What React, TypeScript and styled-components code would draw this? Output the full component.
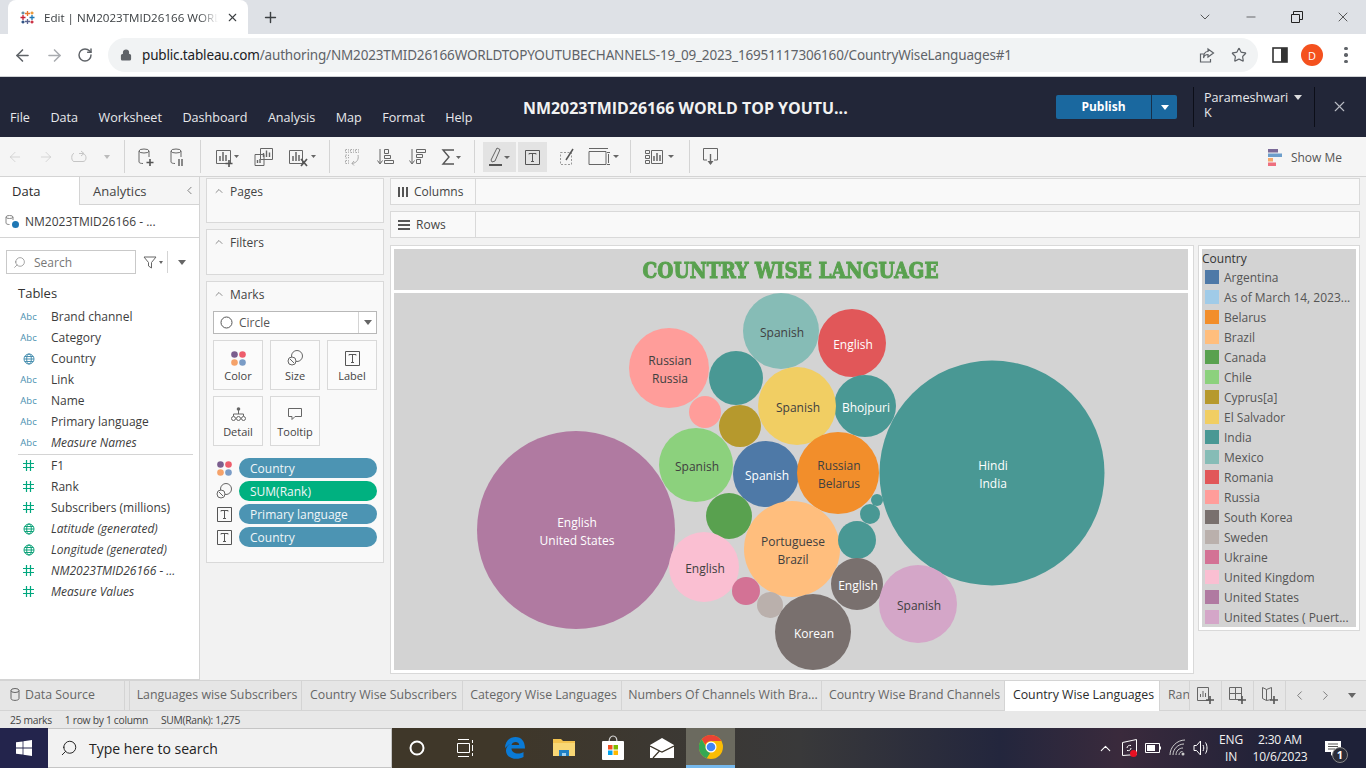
import React from 'react';
import styled, { createGlobalStyle } from 'styled-components';
import { ArrowLeft, ArrowRight, RotateCw, Lock, Star, X, Plus, ChevronDown, ChevronUp, ChevronLeft, ChevronRight, Search, Minus } from 'lucide-react';

const GlobalStyle = createGlobalStyle`
  html, body {
    margin: 0;
    padding: 0;
    width: 1366px;
    height: 768px;
    overflow: hidden;
    background: #f2f2f2;
    font-family: "Open Sans", "Liberation Sans", sans-serif;
  }
  * { box-sizing: border-box; }
`;

const Page = styled.div`
  width: 1366px;
  height: 768px;
  display: flex;
  flex-direction: column;
`;

/* browser chrome */
const TabStrip = styled.div`
  height: 34px;
  background: #dee1e6;
  display: flex;
  align-items: flex-end;
  padding-left: 8px;
`;

const BrowserTab = styled.div`
  width: 240px;
  height: 34px;
  background: #fff;
  border-radius: 8px 8px 0 0;
  display: flex;
  align-items: center;
  padding: 0 9px 0 12px;
  color: #3c4043;
  font-size: 11.6px;
`;

const TabTitle = styled.span`
  margin-left: 9px;
  width: 175px;
  white-space: nowrap;
  overflow: hidden;
  flex-shrink: 0;
  mask-image: linear-gradient(90deg, #000 155px, transparent 174px);
`;

const TabClose = styled.span`
  margin-left: auto;
  display: flex;
  color: #3c4043;
`;

const NewTab = styled.span`
  margin: 0 0 0 14px;
  height: 34px;
  display: flex;
  align-items: center;
  color: #3c4043;
`;

const WindowButtons = styled.div`
  margin-left: auto;
  height: 34px;
  display: flex;
  align-items: center;
  color: #333;
`;

const WindowButton = styled.span`
  width: 46px;
  display: flex;
  justify-content: center;
`;

const AddressRow = styled.div`
  height: 43px;
  background: #fff;
  border-bottom: 1px solid #d0d2d5;
  display: flex;
  align-items: center;
  padding-left: 12px;
`;

const NavButton = styled.span<{ $dim?: boolean }>`
  width: 32px;
  padding-left: 1px;
  display: flex;
  color: ${p => (p.$dim ? '#a9acb0' : '#5f6368')};
`;

const Omnibox = styled.div`
  width: 1150px;
  height: 34px;
  border-radius: 17px;
  background: #f1f3f4;
  display: flex;
  align-items: center;
  padding: 0 11px 0 12px;
  color: #5f6368;
`;

const Url = styled.div`
  margin-left: 10px;
  font-size: 13.5px;
  letter-spacing: -0.165px;
  white-space: nowrap;
  color: #5f6368;
  font-family: "Noto Sans", "Open Sans", sans-serif;
  b { font-weight: 400; color: #202124; }
`;

const OmniIcons = styled.div`
  margin-left: auto;
  display: flex;
  align-items: center;
  gap: 16px;
`;

const BrowserActions = styled.div`
  display: flex;
  align-items: center;
  margin-left: 14px;
  gap: 13px;
`;

const Avatar = styled.span`
  width: 22px;
  height: 22px;
  border-radius: 50%;
  background: #f4511e;
  color: #fff;
  font-size: 11px;
  display: flex;
  align-items: center;
  justify-content: center;
`;

const KebabDots = styled.span`
  display: flex;
  flex-direction: column;
  gap: 3px;
  margin-left: 8px;
  i {
    width: 3.5px;
    height: 3.5px;
    border-radius: 50%;
    background: #5f6368;
  }
`;

/* tableau header */
const AppHeader = styled.div`
  height: 60px;
  background: #222638;
  color: #fff;
  display: flex;
  padding-left: 10px;
`;

const MenuBar = styled.div`
  width: 513px;
  display: flex;
  gap: 20.5px;
  padding-top: 32px;
  font-size: 12.6px;
  line-height: 18px;
  color: #e8e9ec;
`;

const WorkbookTitle = styled.div`
  width: 533px;
  padding-top: 21px;
  font-size: 15.95px;
  line-height: 20px;
  font-weight: 700;
  color: #f2f2f2;
  white-space: nowrap;
`;

const PublishGroup = styled.div`
  margin-top: 18px;
  height: 24px;
  display: flex;
  border-radius: 2px;
  overflow: hidden;
  background: #1a689f;
`;

const PublishButton = styled.div`
  width: 96px;
  font-size: 12px;
  font-weight: 700;
  line-height: 24px;
  text-align: center;
  border-right: 1px solid #17304a;
`;

const PublishCaret = styled.div`
  width: 25px;
  display: flex;
  align-items: center;
  justify-content: center;
`;

const Caret = styled.span<{ $color?: string; $size?: number }>`
  display: inline-block;
  flex-shrink: 0;
  width: 0;
  height: 0;
  border-left: ${p => p.$size ?? 3}px solid transparent;
  border-right: ${p => p.$size ?? 3}px solid transparent;
  border-top: ${p => (p.$size ?? 3) + 1}px solid ${p => p.$color ?? '#666'};
`;

const UserBlock = styled.div`
  margin: 10px 0 10px 16px;
  width: 122px;
  padding: 3px 0 0 10px;
  border-left: 1px solid #0c0e18;
  border-right: 1px solid #0c0e18;
  font-size: 12.6px;
  line-height: 15px;
  color: #e8e9ec;
`;

const UserCaret = styled(Caret)`
  margin-left: 6px;
  vertical-align: 2px;
`;

const CloseApp = styled.span`
  margin-left: 16px;
  margin-top: 21px;
  color: #b9bbc3;
  display: flex;
  height: 18px;
`;

/* toolbar */
const Toolbar = styled.div`
  height: 40px;
  background: #f5f5f5;
  border-bottom: 1px solid #d4d4d4;
  display: flex;
  align-items: stretch;
`;

const ToolGroup = styled.div<{ $w: number; $pad?: number; $gap?: number; $last?: boolean }>`
  width: ${p => p.$w}px;
  margin: 3px 0;
  padding: 1px 0 0 ${p => p.$pad ?? 8}px;
  border-right: ${p => (p.$last ? 'none' : '1px solid #d4d4d4')};
  display: flex;
  align-items: center;
  gap: ${p => p.$gap ?? 12}px;
`;

const ToolPair = styled.span`
  display: flex;
  gap: 2px;
`;

const ToolIcon = styled.span<{ $active?: boolean; $w?: number }>`
  width: ${p => p.$w ?? 20}px;
  height: 30px;
  display: flex;
  align-items: center;
  justify-content: center;
  background: ${p => (p.$active ? '#e3e3e3' : 'transparent')};
`;

const ShowMe = styled.div`
  margin-left: auto;
  padding: 1px 24px 0 0;
  display: flex;
  align-items: center;
  gap: 8px;
  font-size: 12px;
  color: #555;
`;

/* workspace */
const Workspace = styled.div`
  height: 503px;
  display: flex;
  background: #f2f2f2;
`;

const DataPane = styled.div`
  width: 200px;
  background: #fff;
  border-right: 1px solid #d4d4d4;
  border-bottom: 1px solid #d4d4d4;
  display: flex;
  flex-direction: column;
  color: #333;
`;

const PaneTabs = styled.div`
  height: 28px;
  display: flex;
  font-size: 13px;
  line-height: 28px;
`;

const PaneTab = styled.div<{ $active?: boolean; $w: number }>`
  width: ${p => p.$w}px;
  padding-left: ${p => (p.$active ? 12 : 13)}px;
  background: ${p => (p.$active ? '#fff' : '#f5f5f5')};
  border-bottom: ${p => (p.$active ? 'none' : '1px solid #d4d4d4')};
  border-left: ${p => (p.$active ? 'none' : '1px solid #d4d4d4')};
  color: ${p => (p.$active ? '#2b2b2b' : '#444')};
  display: flex;
  align-items: center;
  justify-content: space-between;
  padding-right: 3px;
`;

const SourceRow = styled.div`
  height: 33px;
  border-bottom: 1px solid #d4d4d4;
  display: flex;
  align-items: center;
  padding-left: 5px;
  gap: 5px;
  font-size: 12px;
  color: #3d3d3d;
`;

const SearchRow = styled.div`
  margin-top: 12px;
  padding-left: 6px;
  height: 24px;
  display: flex;
  align-items: center;
`;

const SearchBox = styled.div`
  width: 130px;
  height: 24px;
  flex-shrink: 0;
  border: 1px solid #c9c9c9;
  display: flex;
  align-items: center;
  padding-left: 6px;
  gap: 8px;
  font-size: 12px;
  color: #777;
`;

const MirroredSearch = styled(Search)`
  transform: scaleX(-1);
`;

const SearchTools = styled.div`
  display: flex;
  align-items: center;
  margin-left: 7px;
  gap: 2px;
`;

const ToolDivider = styled.span`
  width: 1px;
  height: 22px;
  background: #d4d4d4;
  margin: 0 8px 0 2px;
`;

const TablesTitle = styled.div`
  margin: 9px 0 3px 18px;
  font-size: 13px;
  line-height: 20px;
  color: #333;
`;

const FieldRow = styled.div<{ $italic?: boolean }>`
  height: 21px;
  display: flex;
  align-items: center;
  padding-left: 20px;
  font-size: 12px;
  color: #3d3d3d;
  font-style: ${p => (p.$italic ? 'italic' : 'normal')};
  white-space: nowrap;
`;

const FieldIcon = styled.span`
  width: 31px;
  padding-right: 14px;
  flex-shrink: 0;
  display: flex;
  justify-content: center;
  font-style: normal;
  font-size: 9.5px;
  color: #4a90b0;
`;

const FieldDivider = styled.div`
  height: 1px;
  background: #d4d4d4;
  margin: 1px 6px 0 18px;
`;

const CardsColumn = styled.div`
  width: 190px;
  padding: 1px 6px 0;
  display: flex;
  flex-direction: column;
  gap: 6px;
`;

const Card = styled.div<{ $h: number }>`
  height: ${p => p.$h}px;
  background: #f9f9f9;
  border: 1px solid #d9d9d9;
  padding: 0 6px;
  font-size: 12px;
  color: #444;
`;

const CardTitle = styled.div`
  height: 24px;
  display: flex;
  align-items: center;
  gap: 5px;
  color: #444;
`;

const MarkSelect = styled.div`
  margin-top: 5px;
  height: 23px;
  background: #fff;
  border: 1px solid #b8b8b8;
  display: flex;
  align-items: center;
  padding-left: 6px;
  gap: 6px;
  color: #555;
`;

const SelectCaret = styled.span`
  margin-left: auto;
  width: 18px;
  height: 21px;
  border-left: 1px solid #d4d4d4;
  display: flex;
  align-items: center;
  justify-content: center;
`;

const MarkGrid = styled.div`
  margin-top: 6px;
  display: grid;
  grid-template-columns: repeat(3, 50px);
  grid-auto-rows: 50px;
  gap: 6px 7px;
`;

const MarkButton = styled.div`
  background: #fbfbfb;
  border: 1px solid #d9d9d9;
  display: flex;
  flex-direction: column;
  align-items: center;
  padding-top: 8px;
  gap: 1px;
  font-size: 11px;
  line-height: 15px;
  color: #444;
`;

const MarkIcon = styled.span`
  height: 18px;
  display: flex;
  align-items: center;
`;

const PillList = styled.div`
  margin-top: 12px;
  display: flex;
  flex-direction: column;
  gap: 3px;
`;

const PillRow = styled.div`
  display: flex;
  align-items: center;
  gap: 4px;
`;

const PillIcon = styled.span`
  width: 22px;
  display: flex;
  justify-content: center;
`;

const Pill = styled.div<{ $color: string }>`
  width: 138px;
  height: 20px;
  border-radius: 10px;
  padding-left: 11px;
  line-height: 21px;
  font-size: 12px;
  color: #f0f6f8;
  background: ${p => p.$color};
`;

const MainColumn = styled.div`
  flex: 1;
  display: flex;
  flex-direction: column;
  padding: 1px 6px 0 0;
`;

const Shelf = styled.div`
  height: 27px;
  margin-bottom: 6px;
  background: #f9f9f9;
  border: 1px solid #d9d9d9;
  display: flex;
  font-size: 12px;
  color: #444;
`;

const ShelfLabel = styled.div`
  width: 85px;
  display: flex;
  align-items: center;
  padding-left: 7px;
  gap: 6px;
  border-right: 1px solid #d9d9d9;
`;

const ShelfBars = styled.span`
  display: flex;
  width: 10px;
  gap: 2px;
  i { flex: 1; height: 10px; background: #555; }
`;

const ShelfRowsIcon = styled.span`
  display: flex;
  flex-direction: column;
  gap: 2px;
  width: 12px;
  i { height: 2px; background: #555; }
`;

const ViewArea = styled.div`
  margin-top: 1px;
  display: flex;
  align-items: flex-start;
  gap: 4px;
`;

const Dashboard = styled.div`
  width: 804px;
  height: 429px;
  background: #fff;
  border: 1px solid #d9d9d9;
  padding: 3px;
  display: flex;
  flex-direction: column;
  gap: 3px;
`;

const ViewTitle = styled.div`
  height: 41px;
  width: 794px;
  background: #d3d3d3;
  display: flex;
  align-items: center;
  justify-content: center;
`;

const TitleText = styled.span`
  font-family: "DejaVu Serif", "Liberation Serif", serif;
  font-weight: 700;
  font-size: 23px;
  color: #59a14f;
  -webkit-text-stroke: 1.1px #59a14f;
  white-space: nowrap;
  display: inline-block;
  transform: scaleX(0.806);
`;

const ChartBox = styled.div`
  width: 794px;
  height: 377px;
  background: #d3d3d3;
  overflow: hidden;
`;

const LegendBox = styled.div`
  width: 162px;
  height: 386px;
  background: #fff;
  border: 1px solid #d9d9d9;
  padding: 3px;
`;

const LegendInner = styled.div`
  height: 100%;
  background: #d3d3d3;
  padding-top: 1px;
  font-size: 12px;
  color: #555;
`;

const LegendTitle = styled.div`
  height: 17px;
  line-height: 17px;
  color: #333;
`;

const LegendRow = styled.div`
  height: 20px;
  display: flex;
  align-items: center;
  gap: 5px;
  padding-left: 3px;
  white-space: nowrap;
`;

const Swatch = styled.span<{ $color: string }>`
  width: 14px;
  height: 14px;
  background: ${p => p.$color};
  flex-shrink: 0;
`;

/* sheet tabs */
const SheetTabs = styled.div`
  height: 31px;
  background: #e6e6e6;
  border-top: 1px solid #d4d4d4;
  border-bottom: 1px solid #d4d4d4;
  display: flex;
  font-size: 12.35px;
  color: #666;
`;

const SheetTab = styled.div<{ $w: number; $active?: boolean; $clip?: boolean }>`
  width: ${p => p.$w}px;
  flex-shrink: 0;
  height: ${p => (p.$active ? 30 : 29)}px;
  background: ${p => (p.$active ? '#fff' : 'transparent')};
  color: ${p => (p.$active ? '#2b2b2b' : '#666')};
  border-right: 1px solid #d4d4d4;
  padding: 0 0 3px ${p => (p.$clip ? 8 : 3)}px;
  display: flex;
  align-items: center;
  justify-content: ${p => (p.$clip ? 'flex-start' : 'center')};
  white-space: nowrap;
  overflow: hidden;
`;

const DataSourceTab = styled(SheetTab)`
  justify-content: flex-start;
  padding-left: 10px;
  gap: 5px;
`;

const TabGap = styled.span`
  width: 5px;
  border-right: 1px solid #d4d4d4;
`;

const SheetTool = styled.span`
  width: 32px;
  height: 29px;
  flex-shrink: 0;
  border-right: 1px solid #d4d4d4;
  display: flex;
  align-items: center;
  justify-content: center;
`;

const SheetNav = styled.span`
  width: 26.5px;
  flex-shrink: 0;
  display: flex;
  align-items: center;
  justify-content: center;
  color: #666;
`;

const StatusBar = styled.div`
  height: 17px;
  background: #e8e8e8;
  display: flex;
  align-items: center;
  padding-left: 10px;
  gap: 13px;
  font-size: 10.3px;
  letter-spacing: -0.3px;
  color: #444;
`;

/* windows taskbar */
const Taskbar = styled.div`
  height: 40px;
  display: flex;
  align-items: center;
  color: #fff;
  background: linear-gradient(90deg, #3f3729 0, #3f3729 500px, #39393a 800px, #23263d 1000px, #3a2a3c 1120px, #1e2138 1290px);
`;

const StartButton = styled.div`
  width: 48px;
  height: 40px;
  background: #23244c;
  display: flex;
  align-items: center;
  justify-content: center;
`;

const TaskSearch = styled.div`
  width: 344px;
  height: 40px;
  background: #f2f2f2;
  border: 1px solid #c5c5c5;
  border-left: none;
  display: flex;
  align-items: center;
  padding-left: 12px;
  gap: 11px;
  font-size: 14px;
  color: #222;
`;

const TaskIcon = styled.span<{ $active?: boolean }>`
  width: 49px;
  height: 40px;
  display: flex;
  align-items: center;
  justify-content: center;
  background: ${p => (p.$active ? '#6b6a5f' : 'transparent')};
  border-bottom: ${p => (p.$active ? '3px solid #76b9ed' : 'none')};
`;

const TrayArea = styled.div`
  margin-left: auto;
  display: flex;
  align-items: center;
  padding-right: 25px;
  height: 40px;
`;

const TrayIcons = styled.div`
  display: flex;
  align-items: center;
  gap: 6.5px;
  margin-right: 6px;
`;

const TrayText = styled.div<{ $w: number }>`
  width: ${p => p.$w}px;
  text-align: center;
  font-size: 12px;
  line-height: 17px;
  letter-spacing: -0.2px;
  color: #f2f2f2;
`;

const NotifyWrap = styled.span`
  position: relative;
  display: flex;
  margin-left: 12px;
`;

const NotifyBadge = styled.span`
  position: absolute;
  right: -7px;
  bottom: -7px;
  width: 16px;
  height: 16px;
  border-radius: 50%;
  background: #2a2c38;
  border: 1px solid #888;
  font-size: 11px;
  font-weight: 700;
  line-height: 14px;
  text-align: center;
  color: #fff;
`;

/* icons drawn to match the tableau set */
const Glyph: React.FC<{ w?: number; h?: number; children: React.ReactNode; stroke?: string; weight?: number }> = ({ w = 20, h = 20, children, stroke = '#666', weight = 1 }) => (
  <svg width={w} height={h} viewBox={`0 0 ${w} ${h}`} fill="none" stroke={stroke} strokeWidth={weight}>
    {children}
  </svg>
);

const TableauLogo = () => (
  <svg width={15} height={15} viewBox="0 0 15 15" strokeWidth={1.3}>
    <path d="M7.5 1v5M5 3.5h5" stroke="#e8762c" />
    <path d="M7.5 9v5M5 11.5h5" stroke="#5b6591" />
    <path d="M3 5v5M.5 7.5h5" stroke="#c72035" />
    <path d="M12 5v5M9.5 7.5h5" stroke="#1f77b4" />
    <path d="M3 1.5v3M1.5 3h3" stroke="#59879b" />
    <path d="M12 1.5v3M10.5 3h3" stroke="#eb912b" />
    <path d="M3 10.5v3M1.5 12h3" stroke="#1f447a" />
    <path d="M12 10.5v3M10.5 12h3" stroke="#c72035" />
  </svg>
);

const Cylinder: React.FC<{ pause?: boolean }> = ({ pause }) => (
  <Glyph w={18} h={20}>
    <ellipse cx={7} cy={4} rx={5} ry={2} />
    <path d="M2 4v11c0 1 2 1.5 4 1.5M12 4v6" />
    {pause ? <path d="M10 12v7M13 12v7" strokeWidth={1.5} /> : <path d="M13 12v7M9.5 15.5h7" strokeWidth={1.6} stroke="#555" />}
  </Glyph>
);

const SmallCylinder = () => (
  <Glyph w={10} h={13}>
    <ellipse cx={5} cy={2.5} rx={4} ry={2} />
    <path d="M1 2.500v8c0 2.500 8 2.500 8 0v-8" />
  </Glyph>
);

const BarsPlus = () => (
  <Glyph w={24} h={20}>
    <path d="M1.5 3.5h14v13h-14z" />
    <path d="M5 14V9M8 14V5M11 14V8" strokeWidth={1.5} />
    <path d="M14 13v7M10.5 16.5h7" strokeWidth={1.6} stroke="#555" />
    <path d="M19 8h5l-2.500 3z" fill="#666" stroke="none" />
  </Glyph>
);

const BarsStack = () => (
  <Glyph w={19} h={20}>
    <path d="M6.500 1.500h12v11h-12zM1 7.500h9v11h-9z" fill="#f5f5f5" />
    <path d="M9.500 10V6M12.500 10V3.500M15.500 10V5.500M3.500 16v-3M6 16v-4" strokeWidth={1.4} />
  </Glyph>
);

const BarsClear = () => (
  <Glyph w={28} h={20}>
    <path d="M1.500 3.500h13v13h-13z" />
    <path d="M5 14V9M8 14V5M11 14V8" strokeWidth={1.5} />
    <path d="M13 12l6 7M19 12l-6 7" strokeWidth={1.7} stroke="#555" />
    <path d="M23 8h5l-2.500 3z" fill="#666" stroke="none" />
  </Glyph>
);

const SwapIcon = () => (
  <Glyph w={18} h={20} stroke="#aaa">
    <path d="M1.500 2.500h3v3h-3zM6.500 2.500h3v3h-3zM11.500 2.500h3v3h-3zM1.500 8h3v3h-3zM1.500 13.500h3v3h-3z" strokeDasharray="1.500 1" />
    <path d="M14 8c1 4-1 8-6 8.500M10 14l-2 2.500 2 2" />
  </Glyph>
);

const SortAsc = () => (
  <Glyph w={17} h={20}>
    <path d="M3 2v14M.5 13.500L3 17l2.500-3.500" />
    <path d="M7.500 2.500h4v4h-4zM7.500 8.500h6v3h-6zM7.500 13.500h9v3h-9z" />
  </Glyph>
);

const SortDesc = () => (
  <Glyph w={17} h={20}>
    <path d="M3 2v14M.5 13.500L3 17l2.500-3.500" />
    <path d="M7.500 2.500h9v3h-9zM7.500 7.500h6v3h-6zM7.500 12.500h4v4h-4z" />
  </Glyph>
);

const SigmaIcon = () => (
  <Glyph w={20} h={20} stroke="#555">
    <path d="M13 3H2l6 7-6 7h11" strokeWidth={1.4} />
    <path d="M15 9h5l-2.500 3z" fill="#666" stroke="none" />
  </Glyph>
);

const HighlightIcon = () => (
  <Glyph w={23} h={22}>
    <path d="M3 14L9 2l3 1.500L7 15l-3 1z" />
    <path d="M1 19h13" strokeWidth={2} stroke="#555" />
    <path d="M16 10h6l-3 3z" fill="#666" stroke="none" />
  </Glyph>
);

const TextBox = () => (
  <Glyph w={17} h={17} stroke="#555">
    <path d="M1.500 1.500h14v14h-14z" />
    <path d="M5 5.500V4.500h7v1M8.500 4.500v8M7 12.500h3" />
  </Glyph>
);

const FormatIcon = () => (
  <Glyph w={17} h={20} stroke="#999">
    <path d="M1.500 5.500h11v12h-11z" strokeDasharray="2 1.500" />
    <path d="M7 13L14 2" stroke="#555" strokeWidth={1.5} />
  </Glyph>
);

const FitIcon = () => (
  <Glyph w={31} h={20}>
    <path d="M1 1.500h19M1 4.500h17v13H1zM20.500 7v9M19 5.500h3M19 17.500h3" />
    <path d="M25 8h6l-3 3z" fill="#666" stroke="none" />
  </Glyph>
);

const ShowMeMini = () => (
  <Glyph w={30} h={20}>
    <path d="M1.500 3.500h4v3h-4zM1.500 8.500h4v3h-4zM1.500 13.500h4v3h-4zM7.500 3.500h11v13h-11z" />
    <path d="M10 14V9M13 14V6M16 14V8" strokeWidth={1.5} />
    <path d="M24 8h6l-3 3z" fill="#666" stroke="none" />
  </Glyph>
);

const DownloadTray = () => (
  <Glyph w={17} h={20}>
    <path d="M5 13H1.500V1.500h14V13H12" />
    <path d="M8.500 7v10" strokeWidth={1.4} />
    <path d="M5.500 14h6L8.500 18z" fill="#666" stroke="none" />
  </Glyph>
);

const RedoIcon = () => (
  <Glyph w={18} h={20} stroke="#c5c5c5">
    <path d="M4 6.500c-3 0-3 8 0 8h9c4 0 4-7 0-8H9M11 4l3 2.500L11 9" />
  </Glyph>
);

const ShowMeIcon = () => (
  <svg width={16} height={20} viewBox="0 0 16 20">
    <rect x={1} y={2} width={10} height={3.500} fill="#7b6a98" />
    <rect x={1} y={6.500} width={14} height={3.500} fill="#6d9ecb" />
    <rect x={1} y={11} width={5} height={3.500} fill="#f5a86c" />
    <rect x={1} y={15.500} width={8} height={3.500} fill="#ee6f7e" />
  </svg>
);

const ColorDots: React.FC<{ size?: number }> = ({ size = 15 }) => (
  <svg width={size} height={size} viewBox="0 0 15 15">
    <circle cx={3.500} cy={3.500} r={3.300} fill="#7b5e8e" />
    <circle cx={11.500} cy={3.500} r={3.300} fill="#ee5d6c" />
    <circle cx={3.500} cy={11.500} r={3.300} fill="#f5a26a" />
    <circle cx={11.500} cy={11.500} r={3.300} fill="#7a9cc6" />
  </svg>
);

const SizeCircles = () => (
  <Glyph w={16} h={16}>
    <circle cx={10} cy={6} r={5.500} />
    <circle cx={5} cy={11} r={4} fill="#f9f9f9" />
    <path d="M3 9l4 4" />
  </Glyph>
);

const DetailIcon = () => (
  <Glyph w={15} h={15}>
    <circle cx={7.500} cy={2} r={1.800} fill="#666" stroke="none" />
    <path d="M7.500 3v4M2.500 9V7h10v2" />
    <circle cx={2.500} cy={11.500} r={2} />
    <circle cx={7.500} cy={11.500} r={2} />
    <circle cx={12.500} cy={11.500} r={2} />
  </Glyph>
);

const TooltipIcon = () => (
  <Glyph w={16} h={15}>
    <path d="M1.500 1.500h13v8H8l-3 3v-3H1.500z" />
  </Glyph>
);

const CircleMark = () => (
  <Glyph w={13} h={13}>
    <circle cx={6.500} cy={6.500} r={5.500} stroke="#555" />
  </Glyph>
);

const GlobeIcon: React.FC<{ dark?: boolean }> = ({ dark }) => (
  <Glyph w={12} h={12} stroke={dark ? '#0fa37a' : '#4a90b0'}>
    <circle cx={6} cy={6} r={5} />
    <ellipse cx={6} cy={6} rx={2.300} ry={5} />
    <path d="M1 6h10M1.800 3.500h8.400M1.800 8.500h8.400" />
  </Glyph>
);

const HashIcon = () => (
  <Glyph w={11} h={11} stroke="#00a77e" weight={1.2}>
    <path d="M3.500 0v11M7.500 0v11M0 3.500h11M0 7.500h11" />
  </Glyph>
);

const SourceIcon = () => (
  <svg width={15} height={15} viewBox="0 0 15 15" fill="none" stroke="#888">
    <ellipse cx={4.500} cy={3} rx={3.500} ry={1.500} />
    <path d="M1 3v6c0 1 1.500 1.500 3.500 1.500M8 3v3" />
    <circle cx={10.500} cy={10.500} r={3.500} fill="#1f77b4" stroke="none" />
  </svg>
);

const FilterIcon = () => (
  <Glyph w={14} h={14}>
    <path d="M1 2h12L8.500 7.500V13l-3-2V7.500z" />
  </Glyph>
);

const SheetPlus: React.FC<{ kind: 'sheet' | 'dash' | 'story' }> = ({ kind }) => (
  <Glyph w={19} h={19}>
    {kind === 'sheet' && <path d="M1.500 1.500h11v13h-11zM4.500 11V8M7 11V5M9.500 11V7" />}
    {kind === 'dash' && <path d="M1.500 1.500h12v12h-12zM1.500 7.500h12M7.500 1.500v12" />}
    {kind === 'story' && <path d="M2.500 1.500l4 2 5-2v12l-5 1-4-2zM6.500 3.500v11" />}
    <path d="M14 10v8M10 14h8" strokeWidth={1.6} stroke="#555" />
  </Glyph>
);

const WindowsFlag = () => (
  <svg width={16} height={16} viewBox="0 0 16 16" fill="#fff">
    <path d="M0 2.300l6.600-.9v6.200H0zM7.400 1.300L16 0v7.600H7.400zM0 8.400h6.600v6.200L0 13.700zM7.400 8.400H16V16l-8.600-1.300z" />
  </svg>
);

const TaskViewIcon = () => (
  <svg width={18} height={18} viewBox="0 0 18 18" fill="none" stroke="#fff">
    <path d="M1 .5h11M1 17.500h11M.5 4.500h12v9H.5zM15.500 1v3M15.500 6v6M15.500 14v3" />
  </svg>
);

const EdgeLogo = () => (
  <svg width={22} height={24} viewBox="0 0 22 24">
    <path
      d="M1 12C1 5 6 1 11.500 1 17.500 1 21 5.500 21 12.500H7.500c.2 5 7 6.500 12 3.500v5c-6 3.500-17 2-17.500-6-.2-3 1.500-5.500 4-7C4 9 3 10 1 12zM7.500 9h7.700c0-4-7-4-7.700 0z"
      fill="#0a7ad6"
    />
  </svg>
);

const FolderLogo = () => (
  <svg width={22} height={20} viewBox="0 0 22 20">
    <path d="M0 1h8l2 2h12v15H0z" fill="#f3c34f" />
    <path d="M0 5h22v13H0z" fill="#f8d775" />
    <path d="M6 18v-6h10v6z" fill="#1e7fc4" />
    <path d="M9 18v-3h4v3z" fill="#9ed0ef" />
  </svg>
);

const StoreLogo = () => (
  <svg width={24} height={26} viewBox="0 0 24 26">
    <path d="M8 7c0-8 8-8 8 0" fill="none" stroke="#ddd" strokeWidth={1.2} />
    <rect x={1} y={6} width={22} height={19} rx={1} fill="#fff" />
    <rect x={7} y={10} width={4.500} height={4.500} fill="#f25022" />
    <rect x={12.500} y={10} width={4.500} height={4.500} fill="#7fba00" />
    <rect x={7} y={15.500} width={4.500} height={4.500} fill="#00a4ef" />
    <rect x={12.500} y={15.500} width={4.500} height={4.500} fill="#ffb900" />
  </svg>
);

const MailLogo = () => (
  <svg width={24} height={20} viewBox="0 0 24 20">
    <path d="M0 7l12-7 12 7v13H0z" fill="#fff" />
    <path d="M0 8l9.500 5L3 20M24 8L12 14l-2.500-1" fill="none" stroke="#3a3328" strokeWidth={1.3} />
  </svg>
);

const ChromeLogo = () => (
  <svg width={24} height={24} viewBox="0 0 24 24">
    <circle cx={12} cy={12} r={12} fill="#fbbc04" />
    <path d="M12 0a12 12 0 0 1 10.400 6H12a6 6 0 0 0-5.600 3.700L2.700 4.300A12 12 0 0 1 12 0z" fill="#ea4335" />
    <path d="M2.700 4.300l4 6.800a6 6 0 0 0 4.400 6.800L7.800 23.300A12 12 0 0 1 2.700 4.300z" fill="#34a853" />
    <circle cx={12} cy={12} r={5.500} fill="#fff" />
    <circle cx={12} cy={12} r={4.300} fill="#4285f4" />
  </svg>
);

const TrayUsb = () => (
  <svg width={18} height={20} viewBox="0 0 18 20" fill="none" stroke="#fff">
    <path d="M1.500 4.500l14-3v15l-14 1zM6 10c0-2 2-3 4-2.500M10 10c0 2-2 3-4 2.500" />
    <circle cx={12.500} cy={15.500} r={3.500} fill="#e81123" stroke="none" />
  </svg>
);

const TrayBattery = () => (
  <svg width={17} height={12} viewBox="0 0 17 12" fill="none" stroke="#fff">
    <path d="M.5 1.500h14v9H.5zM15.500 4.500v3" />
    <rect x={2} y={3} width={8} height={6} fill="#fff" stroke="none" />
  </svg>
);

const TrayWifi = () => (
  <svg width={18} height={18} viewBox="0 0 18 18" fill="none" stroke="#ccc">
    <path d="M1 16C1 8 8 1 16 1M4 16c0-6 5-11 11-11M7 16c0-4 3-7 7-7M10 16c0-2 1.500-3.500 3.500-3.500" />
    <circle cx={14} cy={15} r={1.500} fill="#ccc" stroke="none" />
  </svg>
);

const TraySound = () => (
  <svg width={16} height={18} viewBox="0 0 16 18" fill="none" stroke="#fff">
    <path d="M1 6.500h2.500L7.500 2v14l-4-4.500H1zM10 6c1 2 1 4 0 6M12.500 3.500c2 3 2 8 0 11" />
  </svg>
);

const NotifyIcon = () => (
  <svg width={16} height={15} viewBox="0 0 16 15">
    <path d="M0 0h16v11H9l-3 4v-4H0z" fill="#fff" />
    <path d="M3 3h10M3 5.500h10M3 8h7" stroke="#555" />
  </svg>
);

const ShareIcon = () => (
  <svg width={16} height={16} viewBox="0 0 16 16" fill="none" stroke="#5f6368" strokeWidth={1.2}>
    <path d="M5 7H1.500v8h10v-3M9 2l5.500 4-5.500 4V7.500C6.500 7.500 5 9 4.500 11c0-4 1.500-6.500 4.500-6.500z" />
  </svg>
);

const SidePanelIcon = () => (
  <svg width={16} height={16} viewBox="0 0 16 16" fill="none">
    <rect x={1} y={1} width={14} height={14} stroke="#333" strokeWidth={1.6} fill="#fff" />
    <rect x={9} y={1} width={6} height={14} fill="#333" />
  </svg>
);

const RestoreIcon = () => (
  <svg width={12} height={12} viewBox="0 0 12 12" fill="none" stroke="#222">
    <path d="M2.500 3.500V.5h9v8h-3M.5 3.500h8v8h-8z" />
  </svg>
);

interface Bubble {
  x: number;
  y: number;
  r: number;
  color: string;
  lines?: string[];
  light?: boolean;
}

// positions are page coordinates read off the packed bubble view
const chartLeft = 394;
const chartTop = 293;

const bubbles: Bubble[] = [
  { x: 992, y: 473, r: 112.5, color: '#499894', lines: ['Hindi', 'India'], light: true },
  { x: 576, y: 530, r: 99, color: '#b07aa1', lines: ['English', 'United States'], light: true },
  { x: 781, y: 331, r: 38, color: '#86bcb6', lines: ['Spanish'] },
  { x: 852, y: 343, r: 34, color: '#e15759', lines: ['English'], light: true },
  { x: 669, y: 368, r: 40, color: '#ff9d9a', lines: ['Russian', 'Russia'] },
  { x: 736, y: 378, r: 27, color: '#499894' },
  { x: 865, y: 406, r: 31, color: '#499894', lines: ['Bhojpuri'], light: true },
  { x: 797, y: 406, r: 39, color: '#f1ce63', lines: ['Spanish'] },
  { x: 705, y: 412, r: 16, color: '#ff9d9a' },
  { x: 740, y: 426, r: 21, color: '#b6992d' },
  { x: 696, y: 465, r: 37, color: '#8cd17d', lines: ['Spanish'] },
  { x: 766, y: 474, r: 33, color: '#4e79a7', lines: ['Spanish'], light: true },
  { x: 838, y: 473, r: 41, color: '#f28e2b', lines: ['Russian', 'Belarus'] },
  { x: 729, y: 516, r: 23, color: '#59a14f' },
  { x: 792, y: 549, r: 48, color: '#ffbe7d', lines: ['Portuguese', 'Brazil'] },
  { x: 877, y: 500, r: 6, color: '#499894' },
  { x: 870, y: 514, r: 10, color: '#499894' },
  { x: 857, y: 540, r: 19, color: '#499894' },
  { x: 704, y: 567, r: 35, color: '#fabfd2', lines: ['English'] },
  { x: 857, y: 584, r: 26, color: '#79706e', lines: ['English'], light: true },
  { x: 918, y: 604, r: 39, color: '#d4a6c8', lines: ['Spanish'] },
  { x: 746, y: 591, r: 14, color: '#d37295' },
  { x: 770, y: 605, r: 13, color: '#bab0ac' },
  { x: 813, y: 632, r: 38, color: '#79706e', lines: ['Korean'], light: true },
];

const legend: [string, string][] = [
  ['Argentina', '#4e79a7'],
  ['As of March 14, 2023...', '#a0cbe8'],
  ['Belarus', '#f28e2b'],
  ['Brazil', '#ffbe7d'],
  ['Canada', '#59a14f'],
  ['Chile', '#8cd17d'],
  ['Cyprus[a]', '#b6992d'],
  ['El Salvador', '#f1ce63'],
  ['India', '#499894'],
  ['Mexico', '#86bcb6'],
  ['Romania', '#e15759'],
  ['Russia', '#ff9d9a'],
  ['South Korea', '#79706e'],
  ['Sweden', '#bab0ac'],
  ['Ukraine', '#d37295'],
  ['United Kingdom', '#fabfd2'],
  ['United States', '#b07aa1'],
  ['United States ( Puert...', '#d4a6c8'],
];

const fieldsTop = [
  { name: 'Brand channel', type: 'abc' },
  { name: 'Category', type: 'abc' },
  { name: 'Country', type: 'globe' },
  { name: 'Link', type: 'abc' },
  { name: 'Name', type: 'abc' },
  { name: 'Primary language', type: 'abc' },
  { name: 'Measure Names', type: 'abc', italic: true },
];

const fieldsBottom = [
  { name: 'F1', type: 'hash' },
  { name: 'Rank', type: 'hash' },
  { name: 'Subscribers (millions)', type: 'hash' },
  { name: 'Latitude (generated)', type: 'geo', italic: true },
  { name: 'Longitude (generated)', type: 'geo', italic: true },
  { name: 'NM2023TMID26166 - ...', type: 'hash', italic: true },
  { name: 'Measure Values', type: 'hash', italic: true },
];

const menus = ['File', 'Data', 'Worksheet', 'Dashboard', 'Analysis', 'Map', 'Format', 'Help'];

const sheets: { name: string; w: number; active?: boolean }[] = [
  { name: 'Languages wise Subscribers', w: 172 },
  { name: 'Country Wise Subscribers', w: 161 },
  { name: 'Category Wise Languages', w: 159 },
  { name: 'Numbers Of Channels With Bra...', w: 200 },
  { name: 'Country Wise Brand Channels', w: 183 },
  { name: 'Country Wise Languages', w: 155, active: true },
];

const fieldIcon = (type: string) => {
  if (type === 'abc') return 'Abc';
  if (type === 'globe') return <GlobeIcon />;
  if (type === 'geo') return <GlobeIcon dark />;
  return <HashIcon />;
};

const FieldList: React.FC<{ items: typeof fieldsBottom }> = ({ items }) => (
  <>
    {items.map(f => (
      <FieldRow key={f.name} $italic={f.italic}>
        <FieldIcon>{fieldIcon(f.type)}</FieldIcon>
        {f.name}
      </FieldRow>
    ))}
  </>
);

const BubbleChart = () => (
  <svg width={794} height={377} viewBox={`${chartLeft} ${chartTop} 794 377`} fontFamily='"Open Sans", sans-serif' fontSize={12}>
    {bubbles.map(b => (
      <g key={`${b.x}-${b.y}`}>
        <circle cx={b.x} cy={b.y} r={b.r} fill={b.color} />
        {b.lines?.map((line, i) => (
          <text
            key={line}
            x={b.x + 1}
            y={b.y + 6 + (i - (b.lines!.length - 1) / 2) * 18}
            textAnchor="middle"
            fill={b.light ? '#ffffff' : '#404040'}
          >
            {line}
          </text>
        ))}
      </g>
    ))}
  </svg>
);

export default function App() {
  return (
    <Page>
      <GlobalStyle />
      <TabStrip>
        <BrowserTab>
          <TableauLogo />
          <TabTitle>Edit | NM2023TMID26166 WORLD TOP</TabTitle>
          <TabClose>
            <X size={13} strokeWidth={2} />
          </TabClose>
        </BrowserTab>
        <NewTab>
          <Plus size={17} strokeWidth={2} />
        </NewTab>
        <WindowButtons>
          <WindowButton>
            <ChevronDown size={16} strokeWidth={1.2} />
          </WindowButton>
          <WindowButton>
            <Minus size={14} strokeWidth={1.2} />
          </WindowButton>
          <WindowButton>
            <RestoreIcon />
          </WindowButton>
          <WindowButton>
            <X size={16} strokeWidth={1.2} />
          </WindowButton>
        </WindowButtons>
      </TabStrip>

      <AddressRow>
        <NavButton>
          <ArrowLeft size={19} strokeWidth={2} />
        </NavButton>
        <NavButton $dim>
          <ArrowRight size={19} strokeWidth={2} />
        </NavButton>
        <NavButton>
          <RotateCw size={16} strokeWidth={2.2} />
        </NavButton>
        <Omnibox>
          <Lock size={12} strokeWidth={2.4} fill="#5f6368" />
          <Url>
            <b>public.tableau.com</b>/authoring/NM2023TMID26166WORLDTOPYOUTUBECHANNELS-19_09_2023_16951117306160/CountryWiseLanguages#1
          </Url>
          <OmniIcons>
            <ShareIcon />
            <Star size={16} strokeWidth={1.8} />
          </OmniIcons>
        </Omnibox>
        <BrowserActions>
          <SidePanelIcon />
          <Avatar>D</Avatar>
          <KebabDots>
            <i />
            <i />
            <i />
          </KebabDots>
        </BrowserActions>
      </AddressRow>

      <AppHeader>
        <MenuBar>
          {menus.map(m => (
            <span key={m}>{m}</span>
          ))}
        </MenuBar>
        <WorkbookTitle>NM2023TMID26166 WORLD TOP YOUTU...</WorkbookTitle>
        <PublishGroup>
          <PublishButton>Publish</PublishButton>
          <PublishCaret>
            <Caret $color="#fff" $size={4} />
          </PublishCaret>
        </PublishGroup>
        <UserBlock>
          Parameshwari<UserCaret $color="#ddd" $size={4} />
          <br />K
        </UserBlock>
        <CloseApp>
          <X size={17} strokeWidth={1.6} />
        </CloseApp>
      </AppHeader>

      <Toolbar>
        <ToolGroup $w={125} $pad={7} $gap={15}>
          <ArrowLeft size={16} strokeWidth={1} color="#c5c5c5" />
          <ArrowRight size={16} strokeWidth={1} color="#c5c5c5" />
          <ToolIcon>
            <RedoIcon />
          </ToolIcon>
          <Caret $color="#bbb" />
        </ToolGroup>
        <ToolGroup $w={76} $pad={12} $gap={14}>
          <Cylinder />
          <Cylinder pause />
        </ToolGroup>
        <ToolGroup $w={129} $pad={14} $gap={15}>
          <BarsPlus />
          <BarsStack />
          <BarsClear />
        </ToolGroup>
        <ToolGroup $w={145} $pad={14} $gap={15}>
          <SwapIcon />
          <SortAsc />
          <SortDesc />
          <SigmaIcon />
        </ToolGroup>
        <ToolGroup $w={156}>
          <ToolPair>
            <ToolIcon $active $w={33}>
              <HighlightIcon />
            </ToolIcon>
            <ToolIcon $active $w={29}>
              <TextBox />
            </ToolIcon>
          </ToolPair>
          <FormatIcon />
          <FitIcon />
        </ToolGroup>
        <ToolGroup $w={59} $pad={13}>
          <ShowMeMini />
        </ToolGroup>
        <ToolGroup $w={60} $pad={12} $last>
          <DownloadTray />
        </ToolGroup>
        <ShowMe>
          <ShowMeIcon />
          Show Me
        </ShowMe>
      </Toolbar>

      <Workspace>
        <DataPane>
          <PaneTabs>
            <PaneTab $active $w={79}>Data</PaneTab>
            <PaneTab $w={120}>
              Analytics
              <ChevronLeft size={13} strokeWidth={1.2} />
            </PaneTab>
          </PaneTabs>
          <SourceRow>
            <SourceIcon />
            NM2023TMID26166 - ...
          </SourceRow>
          <SearchRow>
            <SearchBox>
              <MirroredSearch size={13} strokeWidth={1.2} />
              Search
            </SearchBox>
            <SearchTools>
              <FilterIcon />
              <Caret $size={2.5} />
              <ToolDivider />
              <Caret $size={4} />
            </SearchTools>
          </SearchRow>
          <TablesTitle>Tables</TablesTitle>
          <FieldList items={fieldsTop} />
          <FieldDivider />
          <FieldList items={fieldsBottom} />
        </DataPane>

        <CardsColumn>
          <Card $h={45}>
            <CardTitle>
              <ChevronUp size={12} strokeWidth={1.2} />
              Pages
            </CardTitle>
          </Card>
          <Card $h={46}>
            <CardTitle>
              <ChevronUp size={12} strokeWidth={1.2} />
              Filters
            </CardTitle>
          </Card>
          <Card $h={282}>
            <CardTitle>
              <ChevronUp size={12} strokeWidth={1.2} />
              Marks
            </CardTitle>
            <MarkSelect>
              <CircleMark />
              Circle
              <SelectCaret>
                <Caret $size={4} />
              </SelectCaret>
            </MarkSelect>
            <MarkGrid>
              <MarkButton>
                <MarkIcon>
                  <ColorDots />
                </MarkIcon>
                Color
              </MarkButton>
              <MarkButton>
                <MarkIcon>
                  <SizeCircles />
                </MarkIcon>
                Size
              </MarkButton>
              <MarkButton>
                <MarkIcon>
                  <TextBox />
                </MarkIcon>
                Label
              </MarkButton>
              <MarkButton>
                <MarkIcon>
                  <DetailIcon />
                </MarkIcon>
                Detail
              </MarkButton>
              <MarkButton>
                <MarkIcon>
                  <TooltipIcon />
                </MarkIcon>
                Tooltip
              </MarkButton>
            </MarkGrid>
            <PillList>
              <PillRow>
                <PillIcon>
                  <ColorDots />
                </PillIcon>
                <Pill $color="#4c94b3">Country</Pill>
              </PillRow>
              <PillRow>
                <PillIcon>
                  <SizeCircles />
                </PillIcon>
                <Pill $color="#00b180">SUM(Rank)</Pill>
              </PillRow>
              <PillRow>
                <PillIcon>
                  <TextBox />
                </PillIcon>
                <Pill $color="#4c94b3">Primary language</Pill>
              </PillRow>
              <PillRow>
                <PillIcon>
                  <TextBox />
                </PillIcon>
                <Pill $color="#4c94b3">Country</Pill>
              </PillRow>
            </PillList>
          </Card>
        </CardsColumn>

        <MainColumn>
          <Shelf>
            <ShelfLabel>
              <ShelfBars>
                <i />
                <i />
                <i />
              </ShelfBars>
              Columns
            </ShelfLabel>
          </Shelf>
          <Shelf>
            <ShelfLabel>
              <ShelfRowsIcon>
                <i />
                <i />
                <i />
              </ShelfRowsIcon>
              Rows
            </ShelfLabel>
          </Shelf>
          <ViewArea>
            <Dashboard>
              <ViewTitle>
                <TitleText>COUNTRY WISE LANGUAGE</TitleText>
              </ViewTitle>
              <ChartBox>
                <BubbleChart />
              </ChartBox>
            </Dashboard>
            <LegendBox>
              <LegendInner>
                <LegendTitle>Country</LegendTitle>
                {legend.map(([name, color]) => (
                  <LegendRow key={name}>
                    <Swatch $color={color} />
                    {name}
                  </LegendRow>
                ))}
              </LegendInner>
            </LegendBox>
          </ViewArea>
        </MainColumn>
      </Workspace>

      <SheetTabs>
        <DataSourceTab $w={125}>
          <SmallCylinder />
          Data Source
        </DataSourceTab>
        <TabGap />
        {sheets.map(s => (
          <SheetTab key={s.name} $w={s.w} $active={s.active}>
            {s.name}
          </SheetTab>
        ))}
        <SheetTab $w={30} $clip>Rank</SheetTab>
        <SheetTool>
          <SheetPlus kind="sheet" />
        </SheetTool>
        <SheetTool>
          <SheetPlus kind="dash" />
        </SheetTool>
        <SheetTool>
          <SheetPlus kind="story" />
        </SheetTool>
        <SheetNav>
          <ChevronLeft size={15} strokeWidth={1.3} />
        </SheetNav>
        <SheetNav>
          <ChevronRight size={15} strokeWidth={1.3} />
        </SheetNav>
        <SheetNav>
          <Caret $size={4} />
        </SheetNav>
      </SheetTabs>

      <StatusBar>
        <span>25 marks</span>
        <span>1 row by 1 column</span>
        <span>SUM(Rank): 1,275</span>
      </StatusBar>

      <Taskbar>
        <StartButton>
          <WindowsFlag />
        </StartButton>
        <TaskSearch>
          <MirroredSearch size={18} strokeWidth={1.3} />
          Type here to search
        </TaskSearch>
        <TaskIcon>
          <svg width={16} height={16} viewBox="0 0 16 16" fill="none" stroke="#fff" strokeWidth={2}>
            <circle cx={8} cy={8} r={6.500} />
          </svg>
        </TaskIcon>
        <TaskIcon>
          <TaskViewIcon />
        </TaskIcon>
        <TaskIcon>
          <EdgeLogo />
        </TaskIcon>
        <TaskIcon>
          <FolderLogo />
        </TaskIcon>
        <TaskIcon>
          <StoreLogo />
        </TaskIcon>
        <TaskIcon>
          <MailLogo />
        </TaskIcon>
        <TaskIcon $active>
          <ChromeLogo />
        </TaskIcon>
        <TrayArea>
          <TrayIcons>
            <ChevronUp size={17} strokeWidth={1.5} />
            <TrayUsb />
            <TrayBattery />
            <TrayWifi />
            <TraySound />
          </TrayIcons>
          <TrayText $w={32}>
            ENG
            <br />
            IN
          </TrayText>
          <TrayText $w={66}>
            2:30 AM
            <br />
            10/6/2023
          </TrayText>
          <NotifyWrap>
            <NotifyIcon />
            <NotifyBadge>1</NotifyBadge>
          </NotifyWrap>
        </TrayArea>
      </Taskbar>
    </Page>
  );
}
